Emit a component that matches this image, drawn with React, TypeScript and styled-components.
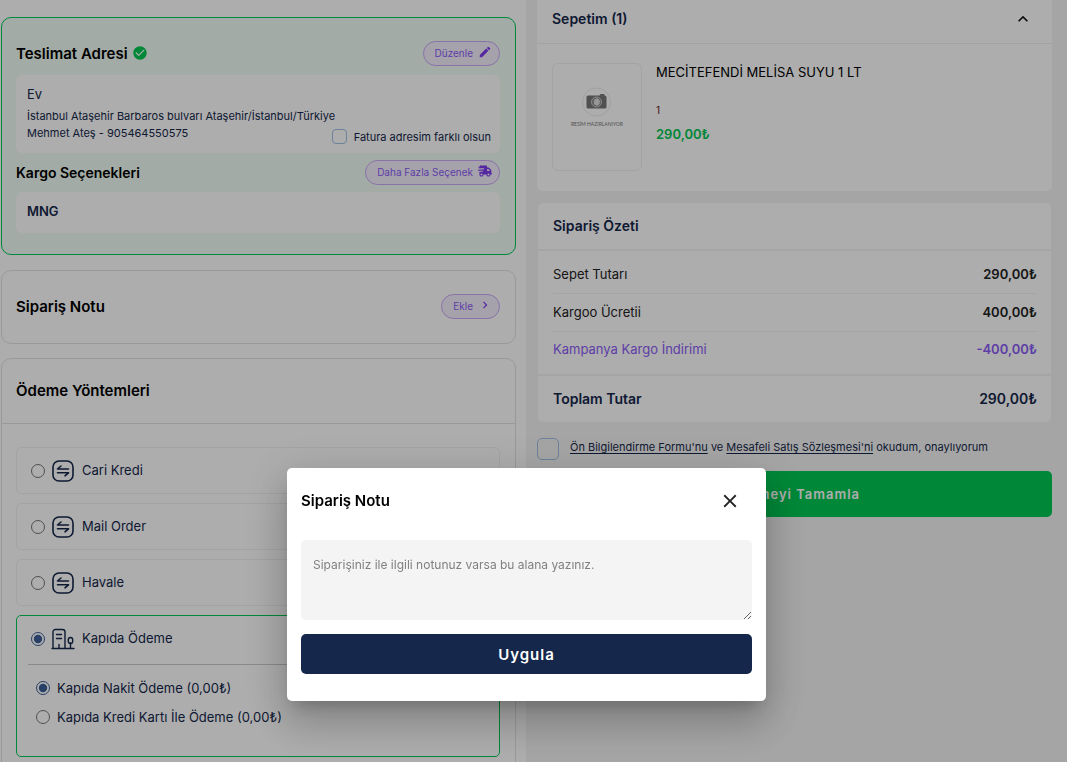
import React from "react";
import styled, { createGlobalStyle, css } from "styled-components";
import { FaTruckFast } from "react-icons/fa6";
import { MdCheckCircle, MdChevronRight, MdClose, MdEdit, MdExpandLess } from "react-icons/md";

const navy = "#15274a";
const green = "#00c853";
const purple = "#8b5cf6";

const GlobalStyle = createGlobalStyle`
  *, *::before, *::after { box-sizing: border-box; }
  body { margin: 0; background: #fff; color: ${navy}; font-family: Inter, sans-serif; font-size: 13px; line-height: 20px; }
  h2, h3, p, dl, dd, dt, ul { margin: 0; padding: 0; }
  button, textarea { font-family: inherit; }
`;

const Page = styled.div`
  display: grid;
  grid-template-columns: 526fr 541fr;
  height: 100vh;
  overflow: hidden;
`;

const Checkout = styled.main`
  display: flex;
  flex-direction: column;
  gap: 15px;
  min-width: 0;
  padding: 17px 10px 0 1px;
`;

const Card = styled.section<{ $selected?: boolean }>`
  flex: none;
  padding: 23px 15px 21px 14px;
  border: 1px solid ${(p) => (p.$selected ? green : "#e2e2e2")};
  border-radius: 10px;
  background: ${(p) => (p.$selected ? "#effcf4" : "#fff")};
`;

const CardHeader = styled.header`
  display: flex;
  align-items: center;
  justify-content: space-between;
`;

const Title = styled.h2<{ $small?: boolean }>`
  display: flex;
  align-items: center;
  gap: 4px;
  color: #000;
  font-size: ${(p) => (p.$small ? 14 : 15)}px;
  font-weight: 600;
  line-height: 25px;
  svg { margin-bottom: 2px; color: ${green}; font-size: 16px; }
`;

const PillButton = styled.button`
  display: flex;
  align-items: center;
  gap: 5px;
  height: 25px;
  padding: 0 7px 0 11px;
  border: 1px solid #c9a9f7;
  border-radius: 13px;
  background: #f5effd;
  color: ${purple};
  font-size: 10px;
  line-height: 15px;
  svg { margin-bottom: 3px; color: #7c3aed; font-size: 14px; }
`;

const Panel = styled.div<{ $gap?: number }>`
  margin: ${(p) => p.$gap ?? 7}px 0 7px;
  padding: 9px 9px 9px 11px;
  border-radius: 6px;
  background: #fff;
  &:last-child { margin-bottom: 0; }
`;

const AddressName = styled.h3`
  font-size: 13px;
  font-weight: 400;
  line-height: 20px;
`;

const AddressText = styled.p`
  padding-top: 4px;
  font-size: 11px;
  line-height: 17px;
`;

const AddressRow = styled.div`
  display: flex;
  justify-content: space-between;
  align-items: flex-end;
  white-space: nowrap;
`;

const AddressLines = styled.div`
  flex: none;
  width: 302px;
  margin-right: 5px;
  height: 60px;
`;

const InvoiceCheck = styled.label`
  display: flex;
  align-items: center;
  gap: 7px;
  margin-left: -60px;
  font-size: 11px;
  line-height: 14px;
`;

const CheckInput = styled.input.attrs({ type: "checkbox" })<{ $size: number }>`
  appearance: none;
  flex: none;
  width: ${(p) => p.$size}px;
  height: ${(p) => p.$size}px;
  margin: 0;
  border: 1px solid #9fc0e8;
  border-radius: ${(p) => (p.$size > 18 ? 5 : 4)}px;
`;

const Carrier = styled.p`
  padding-bottom: 2px;
  font-weight: 600;
  line-height: 21px;
`;

const NoteCard = styled(Card)`
  padding-bottom: 24px;
`;

const PaymentCard = styled(Card)`
  margin-top: -1px;
  padding: 0;
`;

const PaymentHeader = styled.header`
  padding: 19px 14px 20px;
  border-bottom: 1px solid #e2e2e2;
`;

const OptionList = styled.div`
  display: flex;
  flex-direction: column;
  gap: 9px;
  padding: 23px 15px 24px 14px;
`;

const Option = styled.div<{ $selected?: boolean }>`
  padding: 0 11px;
  border: 1px solid ${(p) => (p.$selected ? green : "#f1f1f1")};
  border-radius: 5px;
  ${(p) => p.$selected && css`padding-bottom: 23px;`}
`;

const OptionLabel = styled.label`
  display: flex;
  align-items: center;
  height: 45px;
  padding-left: 3px;
  svg { margin: 0 7px 0 6px; }
`;

const OptionName = styled.span`
  padding-bottom: 2px;
`;

const Radio = styled.input.attrs({ type: "radio" })`
  width: 14px;
  height: 14px;
  margin: 0;
  flex: none;
  accent-color: #3c5f98;
`;

const SubOptions = styled.div`
  display: flex;
  flex-direction: column;
  gap: 9px;
  margin-top: 3px;
  padding: 13px 8px 6px;
  border-top: 1px solid #ccc;
`;

const SubOption = styled.label`
  display: flex;
  align-items: center;
  gap: 7px;
`;

const Sidebar = styled.aside`
  min-width: 0;
  padding: 0 15px 0 11px;
  background: #f4f4f4;
`;

const Basket = styled.section`
  border-radius: 0 0 5px 5px;
  background: #fff;
`;

const BasketHeader = styled.header`
  display: flex;
  align-items: center;
  justify-content: space-between;
  height: 44px;
  padding: 0 19px 6px 15px;
  border-bottom: 1px solid #efefef;
`;

const SideTitle = styled.h2`
  color: ${navy};
  font-size: 14px;
  font-weight: 600;
  line-height: 20px;
`;

const IconButton = styled.button`
  display: flex;
  padding: 0;
  border: 0;
  background: none;
  color: #111;
  font-size: 20px;
`;

const Product = styled.article`
  display: flex;
  gap: 14px;
  padding: 19px 15px 20px;
`;

const Thumb = styled.figure`
  display: flex;
  flex: none;
  align-items: center;
  flex-direction: column;
  width: 90px;
  height: 108px;
  margin: 0;
  padding-top: 22px;
  border: 1px solid #f0f0f0;
  border-radius: 6px;
  color: #777;
  figcaption { padding-top: 2px; font-family: Lato, sans-serif; font-size: 5px; font-weight: 400; line-height: 9px; }
`;

const ProductInfo = styled.div`
  display: flex;
  flex-direction: column;
  min-width: 0;
`;

const ProductName = styled.h3`
  color: #000;
  font-size: 13px;
  font-weight: 400;
  line-height: 18px;
`;

const Quantity = styled.span`
  margin-top: 19px;
  color: #5a2222;
  font-size: 10px;
  line-height: 20px;
`;

const Price = styled.strong`
  margin-top: 4px;
  color: ${green};
  font-weight: 600;
`;

const Summary = styled.section`
  margin: 12px 1px 0;
  border-radius: 5px;
  background: #fff;
`;

const SummaryHeader = styled.header`
  padding: 13px 15px;
  border-bottom: 2px solid #f4f4f4;
`;

const SummaryRows = styled.dl`
  padding: 5px 14px 6px 15px;
`;

const SummaryRow = styled.div<{ $accent?: boolean }>`
  display: flex;
  align-items: center;
  justify-content: space-between;
  height: 38px;
  padding-bottom: 2px;
  border-bottom: 1px solid #f3f3f3;
  color: ${(p) => (p.$accent ? purple : "#222")};
  dd { font-weight: 600; }
  &:last-child { height: 36px; border: 0; }
`;

const TotalRow = styled.div`
  display: flex;
  justify-content: space-between;
  padding: 13px 14px 13px 15px;
  border-top: 2px solid #f4f4f4;
  font-size: 14px;
  font-weight: 600;
`;

const Terms = styled.div`
  display: flex;
  align-items: center;
  gap: 11px;
  margin-top: 16px;
  font-size: 11px;
  line-height: 18px;
  a { color: inherit; text-underline-offset: 2px; }
  label { padding-bottom: 4px; }
`;

const PayButton = styled.button`
  width: 100%;
  height: 46px;
  margin-top: 11px;
  padding-bottom: 2px;
  border: 0;
  border-radius: 5px;
  background: ${green};
  color: #fff;
  font-size: 13px;
  font-weight: 600;
  letter-spacing: 1px;
`;

const Backdrop = styled.div`
  position: fixed;
  inset: 0;
  display: flex;
  align-items: flex-end;
  justify-content: center;
  padding: 0 14px 61px 0;
  background: rgba(0, 0, 0, 0.32);
`;

const Dialog = styled.section`
  width: 479px;
  max-width: 90%;
  padding: 20px 14px 27px;
  border-radius: 5px;
  background: #fff;
  box-shadow: 0 11px 15px -7px rgba(0, 0, 0, 0.2), 0 24px 38px 3px rgba(0, 0, 0, 0.14), 0 9px 46px 8px rgba(0, 0, 0, 0.12);
`;

const DialogHeader = styled.header`
  display: flex;
  align-items: center;
  justify-content: space-between;
  padding: 0 11px 27px 0;
  ${IconButton} { color: #222; font-size: 22px; }
`;

const NoteInput = styled.textarea`
  display: block;
  width: 100%;
  height: 80px;
  padding: 15px 12px;
  border: 0;
  border-radius: 5px;
  background: #f4f4f4;
  font-size: 12px;
  line-height: 20px;
  &::placeholder { color: #808080; }
`;

const ApplyButton = styled.button`
  width: 100%;
  height: 40px;
  margin-top: 14px;
  border: 0;
  border-radius: 5px;
  background: ${navy};
  color: #fff;
  font-size: 15px;
  font-weight: 600;
  letter-spacing: 1px;
`;

const TransferIcon = () => (
  <svg width="24" height="22" viewBox="-1 0 24 22" fill="none" stroke={navy} strokeWidth="1.6" strokeLinecap="round" strokeLinejoin="round">
    <rect x="1" y="1" width="20" height="20" rx="6" />
    <path d="M16.5 9H5.500L9 6M5.500 12.800h11L13 15.800" />
  </svg>
);

const BuildingIcon = () => (
  <svg width="24" height="22" viewBox="0 0 24 22" fill="none" stroke={navy} strokeWidth="1.4" strokeLinecap="round" strokeLinejoin="round">
    <path d="M1 20.500h22M2 20.500V4Q2 1.500 4.500 1.500h7Q14 1.500 14 4v16.500M5.500 6.500h5M5.500 10.500h5M8 20v-3.500M19.500 20v-5" />
    <rect x="17.300" y="9.500" width="4.400" height="6" rx="2.200" />
  </svg>
);

const CameraIcon = () => (
  <svg width="32" height="32" viewBox="0 0 32 32" aria-hidden="true">
    <circle cx="15.500" cy="16" r="14" fill="#fff" stroke="#ececec" />
    <path d="M7 9.500h11.500l1-1.500h3.500l.7 1.500Q25.500 9.500 25.500 11v10q0 1.500-1.500 1.500h-17Q5.500 22.500 5.500 21V11q0-1.500 1.500-1.500z" fill="#777" />
    <circle cx="15.500" cy="16" r="5" fill="#888" stroke="#ccc" />
    <ellipse cx="15.800" cy="16" rx="2.600" ry="3.200" fill="#ddd" stroke="#ddd" />
  </svg>
);

const methods = ["Cari Kredi", "Mail Order", "Havale"];
const rows = [
  { label: "Sepet Tutarı", value: "290,00₺" },
  { label: "Kargoo Ücretii", value: "400,00₺" },
  { label: "Kampanya Kargo İndirimi", value: "-400,00₺", accent: true },
];

export default function App() {
  return (
    <>
      <GlobalStyle />
      <Page>
        <Checkout>
          <Card $selected>
            <CardHeader>
              <Title>Teslimat Adresi <MdCheckCircle /></Title>
              <PillButton type="button">Düzenle <MdEdit /></PillButton>
            </CardHeader>
            <Panel $gap={9}>
              <AddressRow>
                <AddressLines>
                  <AddressName>Ev</AddressName>
                  <AddressText>
                    İstanbul Ataşehir Barbaros bulvarı Ataşehir/İstanbul/Türkiye
                    <br />
                    Mehmet Ateş - 905464550575
                  </AddressText>
                </AddressLines>
                <InvoiceCheck>
                  <CheckInput $size={15} /> Fatura adresim farklı olsun
                </InvoiceCheck>
              </AddressRow>
            </Panel>
            <CardHeader>
              <Title $small>Kargo Seçenekleri</Title>
              <PillButton type="button">Daha Fazla Seçenek <FaTruckFast /></PillButton>
            </CardHeader>
            <Panel>
              <Carrier>MNG</Carrier>
            </Panel>
          </Card>

          <NoteCard>
            <CardHeader>
              <Title>Sipariş Notu</Title>
              <PillButton type="button">Ekle <MdChevronRight /></PillButton>
            </CardHeader>
          </NoteCard>

          <PaymentCard>
            <PaymentHeader><Title>Ödeme Yöntemleri</Title></PaymentHeader>
            <OptionList>
              {methods.map((name) => (
                <Option key={name}>
                  <OptionLabel>
                    <Radio name="method" />
                    <TransferIcon />
                    <OptionName>{name}</OptionName>
                  </OptionLabel>
                </Option>
              ))}
              <Option $selected>
                <OptionLabel>
                  <Radio name="method" defaultChecked />
                  <BuildingIcon />
                  <OptionName>Kapıda Ödeme</OptionName>
                </OptionLabel>
                <SubOptions>
                  <SubOption><Radio name="door" defaultChecked /> Kapıda Nakit Ödeme (0,00₺)</SubOption>
                  <SubOption><Radio name="door" /> Kapıda Kredi Kartı İle Ödeme (0,00₺)</SubOption>
                </SubOptions>
              </Option>
            </OptionList>
          </PaymentCard>
        </Checkout>

        <Sidebar>
          <Basket>
            <BasketHeader>
              <SideTitle>Sepetim (1)</SideTitle>
              <IconButton type="button" aria-label="Sepeti daralt"><MdExpandLess /></IconButton>
            </BasketHeader>
            <Product>
              <Thumb>
                <CameraIcon />
                <figcaption>RESİM HAZIRLANIYOR</figcaption>
              </Thumb>
              <ProductInfo>
                <ProductName>MECİTEFENDİ MELİSA SUYU 1 LT</ProductName>
                <Quantity>1</Quantity>
                <Price>290,00₺</Price>
              </ProductInfo>
            </Product>
          </Basket>

          <Summary>
            <SummaryHeader><SideTitle>Sipariş Özeti</SideTitle></SummaryHeader>
            <SummaryRows>
              {rows.map((row) => (
                <SummaryRow key={row.label} $accent={row.accent}>
                  <dt>{row.label}</dt>
                  <dd>{row.value}</dd>
                </SummaryRow>
              ))}
            </SummaryRows>
            <TotalRow><span>Toplam Tutar</span><span>290,00₺</span></TotalRow>
          </Summary>

          <Terms>
            <CheckInput $size={22} id="terms" />
            <label htmlFor="terms">
              <a href="#bilgilendirme">Ön Bilgilendirme Formu'nu</a> ve <a href="#sozlesme">Mesafeli Satış Sözleşmesi'ni</a> okudum, onaylıyorum
            </label>
          </Terms>
          <PayButton type="button">Ödemeyi Tamamla</PayButton>
        </Sidebar>
      </Page>

      <Backdrop>
        <Dialog role="dialog" aria-modal="true" aria-labelledby="note-title">
          <DialogHeader>
            <Title id="note-title">Sipariş Notu</Title>
            <IconButton type="button" aria-label="Kapat"><MdClose /></IconButton>
          </DialogHeader>
          <NoteInput aria-labelledby="note-title" placeholder="Siparişiniz ile ilgili notunuz varsa bu alana yazınız." />
          <ApplyButton type="button">Uygula</ApplyButton>
        </Dialog>
      </Backdrop>
    </>
  );
}
